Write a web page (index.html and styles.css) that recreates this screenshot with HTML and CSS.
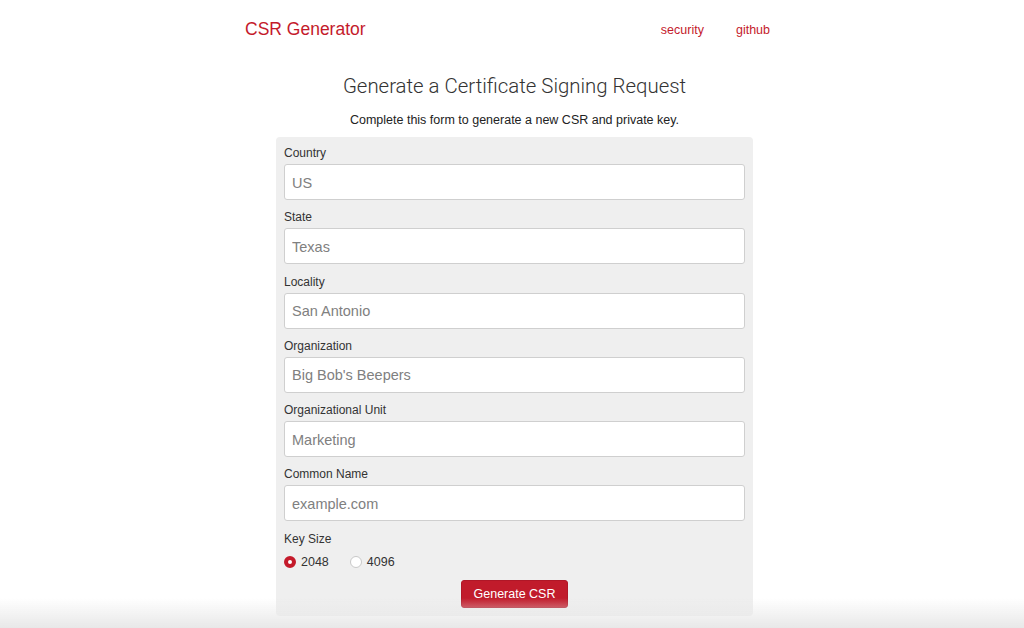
FILE: index.html
```html
<!DOCTYPE html>
<html>
<head>
<meta charset="utf-8">
<title>CSR Generator</title>
<link rel="stylesheet" href="styles.css">
</head>
<body>
<header class="topbar">
  <a class="brand" href="#">CSR Generator</a>
  <nav class="nav">
    <a href="#">security</a>
    <a href="#">github</a>
  </nav>
</header>
<main class="main">
  <h1 class="title">Generate a Certificate Signing Request</h1>
  <p class="lead">Complete this form to generate a new CSR and private key.</p>
  <form class="card">
    <label class="field"><span class="lbl">Country</span><input class="inp" placeholder="US"></label>
    <label class="field"><span class="lbl">State</span><input class="inp" placeholder="Texas"></label>
    <label class="field"><span class="lbl">Locality</span><input class="inp" placeholder="San Antonio"></label>
    <label class="field"><span class="lbl">Organization</span><input class="inp" placeholder="Big Bob's Beepers"></label>
    <label class="field"><span class="lbl">Organizational Unit</span><input class="inp" placeholder="Marketing"></label>
    <label class="field"><span class="lbl">Common Name</span><input class="inp" placeholder="example.com"></label>
    <div class="field keysize">
      <span class="lbl">Key Size</span>
      <div class="radios">
        <label class="radio"><span class="dot on"></span>2048</label>
        <label class="radio"><span class="dot"></span>4096</label>
      </div>
    </div>
    <div class="actions"><button type="button" class="btn">Generate CSR</button></div>
  </form>
</main>
<div class="fade"></div>
</body>
</html>
```
FILE: styles.css
```css
html, body { margin: 0; padding: 0; background: #fff; }
body { font-family: "Liberation Sans", Arial, sans-serif; color: #333; overflow: hidden; height: 628px; }
.topbar { width: 525px; margin-left: calc(50% - 267px); display: flex; justify-content: space-between; align-items: center; height: 57px; padding-top: 1px; }
.brand { color: #c41a2b; text-decoration: none; font-size: 17.5px; }
.nav { display: flex; gap: 32px; }
.nav a { color: #c41a2b; text-decoration: none; font-size: 12.5px; }
.main { display: flex; flex-direction: column; align-items: center; padding-left: 5px; }
.title { font-family: Roboto, "Liberation Sans", sans-serif; font-weight: 300; font-size: 20.4px; color: #333; margin: 15px 0 0; line-height: 26px; }
.lead { font-size: 12.5px; margin: 14px 0 0; line-height: 15px; color: #222; }
.card { margin-top: 9px; width: 461px; background: #efefef; border-radius: 4px; padding: 7px 8px 8px; display: flex; flex-direction: column; gap: 8.3px; }
.field { display: flex; flex-direction: column; }
.lbl { font-size: 12px; line-height: 18px; margin-bottom: 2px; color: #333; }
.inp { box-sizing: border-box; height: 36px; width: 100%; border: 1px solid #cfcfcf; border-radius: 3px; background: #fff; padding: 1px 7px 0; font-family: "Liberation Sans", Arial, sans-serif; font-size: 14.5px; color: #333; outline: none; }
.inp::placeholder { color: #808080; }
.keysize { gap: 2px; }
.radios { display: flex; gap: 21px; height: 20px; align-items: center; }
.radio { display: flex; align-items: center; gap: 5px; font-size: 12.5px; color: #333; }
.dot { box-sizing: border-box; width: 12px; height: 12px; border-radius: 50%; border: 1px solid #c9c9c9; background: #fff; }
.dot.on { border: 4px solid #c41a2b; background: #fff; }
.actions { display: flex; justify-content: center; margin-top: 0; }
.btn { background: #c11b2b; color: #fff; border: 1px solid #b01727; border-radius: 3px; height: 28px; width: 107px; font-family: "Liberation Sans", Arial, sans-serif; font-size: 12.5px; padding: 0; }
.fade { position: fixed; left: 0; right: 0; bottom: 0; height: 30px; background: linear-gradient(to bottom, rgba(232,232,232,0), rgba(232,232,232,1)); pointer-events: none; }
```
